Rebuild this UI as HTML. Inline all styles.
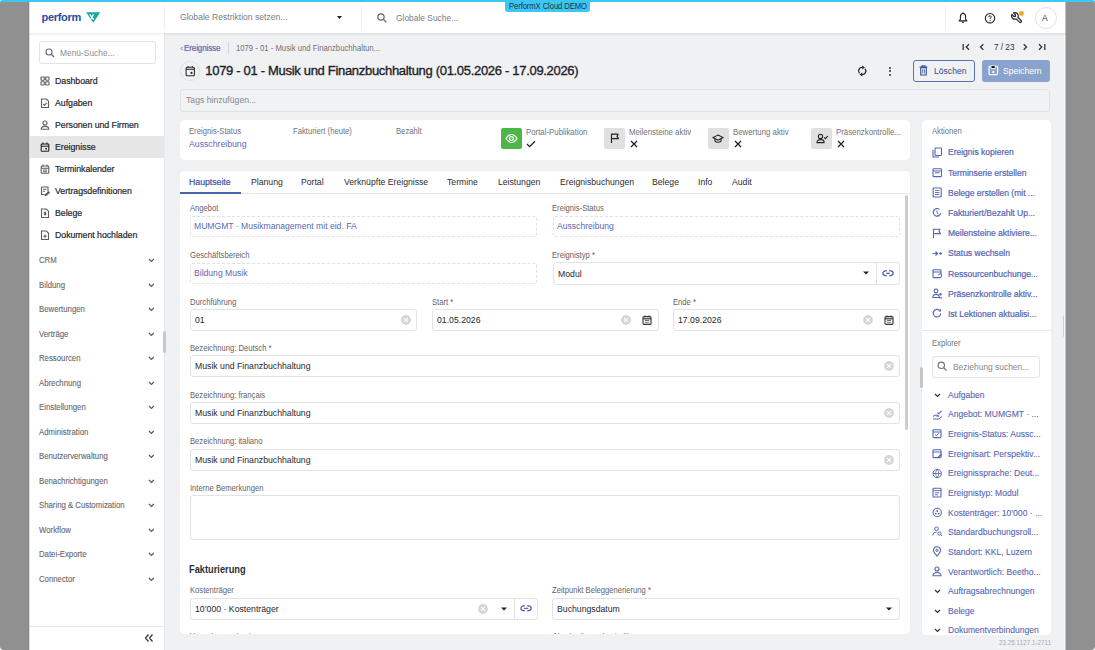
<!DOCTYPE html>
<html><head><meta charset="utf-8">
<style>
*{box-sizing:border-box;margin:0;padding:0}
html,body{width:1095px;height:650px;overflow:hidden}
body{background:#fff;font-family:"Liberation Sans",sans-serif;position:relative;color:#222}
.a{position:absolute}
.t{position:absolute;white-space:nowrap;line-height:1}
</style></head>
<body>

<div class="a" style="left:0px;top:0px;width:1095px;height:650px;background:#909090;border-radius:4px"></div>
<div class="a" style="left:29px;top:0px;width:1037px;height:650px;background:#fff"></div>
<div class="a" style="left:164px;top:33px;width:902px;height:617px;background:#f0f1f3"></div>
<div class="a" style="left:0px;top:0px;width:1095px;height:2px;background:#3ec6f2;z-index:5;border-radius:3px 3px 0 0"></div>
<div class="a" style="left:29px;top:2px;width:1037px;height:31px;background:#fff"></div>
<div class="t " style="left:41.50px;top:12.00px;font-size:11px;color:#1f4f9e;font-weight:700;letter-spacing:-0.3px;">perform</div>
<svg class="a" style="left:86px;top:12px;" width="15" height="12" viewBox="0 0 15 12"><path d="M.1 .2H14.2L7.4 10.8Z" fill="#16a9a0"/><path d="M3.8 2.4L7.7 7.7M7.5 2.4L4.9 7" stroke="#fff" stroke-width="1.25" fill="none"/></svg>
<div class="a" style="left:164px;top:6px;width:1px;height:23px;background:#eeeeee"></div>
<div class="t " style="left:180.00px;top:13.00px;font-size:9.299px;color:#7a7d82;transform:scaleX(0.9259);transform-origin:0 0;">Globale Restriktion setzen...</div>
<svg class="a" style="left:336.5px;top:15.5px;" width="5" height="3" viewBox="0 0 5 3"><path d="M0 0H5L2.5 3Z" fill="#222"/></svg>
<div class="a" style="left:360.5px;top:6px;width:1px;height:23px;background:#eeeeee"></div>
<svg class="a" style="left:377px;top:13px;" width="10" height="10" viewBox="0 0 10 10"><circle cx="4" cy="4" r="3.2" stroke="#666" stroke-width="1.2" fill="none"/><path d="M6.4 6.4L9.3 9.3" stroke="#666" stroke-width="1.3"/></svg>
<div class="t " style="left:396.30px;top:14.00px;font-size:9.081px;color:#7a7d82;transform:scaleX(0.9259);transform-origin:0 0;">Globale Suche...</div>
<div class="a" style="left:505px;top:0;width:85px;height:12px;background:#3ec6f2;border-radius:0 0 3px 3px;z-index:5"></div>
<div class="t " style="left:508.50px;top:2.00px;font-size:8.315px;color:#173848;letter-spacing:-0.10800000000000001px;z-index:6;transform:scaleX(0.9259);transform-origin:0 0;">PerformX Cloud DEMO</div>
<div class="a" style="left:944.5px;top:6px;width:1px;height:23px;background:#eeeeee"></div>
<svg class="a" style="left:958px;top:12px;" width="10" height="11" viewBox="0 0 10 11"><path d="M5 1.2C3.2 1.4 2.4 2.8 2.4 4.8V7.4L1.1 8.9H8.9L7.6 7.4V4.8C7.6 2.8 6.8 1.4 5 1.2Z" stroke="#222" stroke-width="1.1" fill="none" stroke-linejoin="round"/><path d="M4 10.1H6" stroke="#222" stroke-width="1.1"/><path d="M5 .4V1.3" stroke="#222" stroke-width="1"/></svg>
<svg class="a" style="left:984px;top:11.5px;" width="12" height="12" viewBox="0 0 12 12"><circle cx="6" cy="6.2" r="4.7" stroke="#222" stroke-width="1.1" fill="none"/><path d="M4.7 5C4.7 4.2 5.3 3.7 6 3.7S7.3 4.2 7.3 4.9C7.3 5.8 6 5.9 6 7" stroke="#222" stroke-width=".9" fill="none"/><circle cx="6" cy="8.4" r=".55" fill="#222"/></svg>
<svg class="a" style="left:1010.4px;top:11.4px;" width="13" height="13" viewBox="0 0 13 13"><g transform="scale(0.54)"><path d="M7 10h3v-3l-3.5 -3.5a6 6 0 0 1 8 8l6 6a2 2 0 0 1 -3 3l-6 -6a6 6 0 0 1 -8 -8l3.5 3.5" stroke="#2a2a2a" stroke-width="2.3" fill="none" stroke-linejoin="round" stroke-linecap="round"/></g></svg>
<div class="a" style="left:1019px;top:10.9px;width:4.8px;height:4.8px;border-radius:50%;background:#f4ab2a"></div>
<div class="a" style="left:1035px;top:6.5px;width:22px;height:22px;border:1px solid #e3e3e3;border-radius:50%"></div>
<div class="t " style="left:1042.30px;top:14.00px;font-size:9.299px;color:#333;transform:scaleX(0.9259);transform-origin:0 0;">A</div>
<div class="a" style="left:29px;top:33px;width:135px;height:617px;background:#fff"></div>
<div class="a" style="left:163.5px;top:33px;width:1px;height:617px;background:#e9e9e9"></div>
<div class="a" style="left:38.6px;top:41px;width:117px;height:23px;border:1px solid #e2e3e5;border-radius:3px"></div>
<svg class="a" style="left:44.5px;top:47.5px;" width="10" height="10" viewBox="0 0 10 10"><circle cx="4" cy="4" r="3" stroke="#6a6a6a" stroke-width="1.15" fill="none"/><path d="M6.3 6.3L9 9" stroke="#6a6a6a" stroke-width="1.3"/></svg>
<div class="t " style="left:59.90px;top:49.00px;font-size:9.081px;color:#8a8d91;transform:scaleX(0.9259);transform-origin:0 0;">Menü-Suche...</div>
<div class="a" style="left:29px;top:136px;width:134.5px;height:22px;background:#e6e6e6"></div>
<svg class="a" style="left:39.5px;top:75.5px;" width="10" height="11" viewBox="0 0 10 11"><g fill="none" stroke="#5a5e63" stroke-width="1.1"><rect x="1" y="1" width="3.3" height="3.3" rx=".6"/><rect x="5.7" y="1" width="3.3" height="3.3" rx=".6"/><rect x="1" y="5.7" width="3.3" height="3.3" rx=".6"/><rect x="5.7" y="5.7" width="3.3" height="3.3" rx=".6"/></g></svg>
<div class="t " style="left:54.50px;top:76.00px;font-size:9.518px;color:#25292e;-webkit-text-stroke:0.22px #25292e;letter-spacing:-0.054000000000000006px;transform:scaleX(0.9259);transform-origin:0 0;">Dashboard</div>
<svg class="a" style="left:39.5px;top:97.5px;" width="10" height="11" viewBox="0 0 10 11"><g fill="none" stroke="#5a5e63" stroke-width="1.1"><path d="M1.5 1H6.3L8.5 3.2V9.5H1.5Z"/><path d="M3.2 6L4.5 7.2L6.8 4.8"/></g></svg>
<div class="t " style="left:54.50px;top:98.00px;font-size:9.518px;color:#25292e;-webkit-text-stroke:0.22px #25292e;letter-spacing:-0.054000000000000006px;transform:scaleX(0.9259);transform-origin:0 0;">Aufgaben</div>
<svg class="a" style="left:39.5px;top:119.5px;" width="10" height="11" viewBox="0 0 10 11"><g fill="none" stroke="#5a5e63" stroke-width="1.1"><circle cx="5" cy="3" r="2"/><path d="M1.2 9.3C1.2 7 3 6.4 5 6.4S8.8 7 8.8 9.3Z"/></g></svg>
<div class="t " style="left:54.50px;top:120.00px;font-size:9.518px;color:#25292e;-webkit-text-stroke:0.22px #25292e;letter-spacing:-0.054000000000000006px;transform:scaleX(0.9259);transform-origin:0 0;">Personen und Firmen</div>
<svg class="a" style="left:39.5px;top:141.5px;" width="10" height="11" viewBox="0 0 10 11"><g fill="none" stroke="#222" stroke-width="1.1"><rect x="1.2" y="2" width="7.6" height="7.3" rx=".8"/><path d="M1.2 4.2H8.8M3 .6V2.4M7 .6V2.4"/><rect x="5.3" y="6" width="1.6" height="1.6" fill="#222" stroke="none"/></g></svg>
<div class="t " style="left:54.50px;top:142.00px;font-size:9.518px;color:#25292e;-webkit-text-stroke:0.22px #25292e;letter-spacing:-0.054000000000000006px;transform:scaleX(0.9259);transform-origin:0 0;">Ereignisse</div>
<svg class="a" style="left:39.5px;top:163.5px;" width="10" height="11" viewBox="0 0 10 11"><g fill="none" stroke="#5a5e63" stroke-width="1.1"><rect x="1.2" y="2" width="7.6" height="7.3" rx=".8"/><path d="M1.2 4.2H8.8M3 .6V2.4M7 .6V2.4M3 6H7M3 7.7H7"/></g></svg>
<div class="t " style="left:54.50px;top:164.00px;font-size:9.518px;color:#25292e;-webkit-text-stroke:0.22px #25292e;letter-spacing:-0.054000000000000006px;transform:scaleX(0.9259);transform-origin:0 0;">Terminkalender</div>
<svg class="a" style="left:39.5px;top:185.5px;" width="10" height="11" viewBox="0 0 10 11"><g fill="none" stroke="#5a5e63" stroke-width="1.1"><path d="M1.5 1H8V5.5M1.5 1V8.5H4.5M3 3.3H6.5M3 5.3H5"/><path d="M5.2 8.8L8.5 5.8L9.3 6.6L6 9.5H5.2Z"/></g></svg>
<div class="t " style="left:54.50px;top:186.00px;font-size:9.518px;color:#25292e;-webkit-text-stroke:0.22px #25292e;letter-spacing:-0.054000000000000006px;transform:scaleX(0.9259);transform-origin:0 0;">Vertragsdefinitionen</div>
<svg class="a" style="left:39.5px;top:207.5px;" width="10" height="11" viewBox="0 0 10 11"><g fill="none" stroke="#5a5e63" stroke-width="1.1"><path d="M1.5 1H6.3L8.5 3.2V9.5H1.5Z"/><path d="M6 4.2H4.3V5.3H5.7V6.6H4"/></g></svg>
<div class="t " style="left:54.50px;top:208.00px;font-size:9.518px;color:#25292e;-webkit-text-stroke:0.22px #25292e;letter-spacing:-0.054000000000000006px;transform:scaleX(0.9259);transform-origin:0 0;">Belege</div>
<svg class="a" style="left:39.5px;top:229.5px;" width="10" height="11" viewBox="0 0 10 11"><g fill="none" stroke="#5a5e63" stroke-width="1.1"><path d="M1.5 1H6.3L8.5 3.2V9.5H1.5Z"/><path d="M5 4.5V7.8M3.3 6.2H6.7"/></g></svg>
<div class="t " style="left:54.50px;top:230.00px;font-size:9.518px;color:#25292e;-webkit-text-stroke:0.22px #25292e;letter-spacing:-0.054000000000000006px;transform:scaleX(0.9259);transform-origin:0 0;">Dokument hochladen</div>
<div class="t " style="left:38.80px;top:256.00px;font-size:8.424px;color:#65686d;-webkit-text-stroke:0.1px #65686d;transform:scaleX(0.9259);transform-origin:0 0;">CRM</div>
<svg class="a" style="left:148px;top:258.0px;" width="7" height="5" viewBox="0 0 7 5"><path d="M1 1L3.4 3.4L5.8 1" stroke="#585858" stroke-width="1.15" fill="none"/></svg>
<div class="t " style="left:38.80px;top:281.00px;font-size:8.424px;color:#65686d;-webkit-text-stroke:0.1px #65686d;transform:scaleX(0.9259);transform-origin:0 0;">Bildung</div>
<svg class="a" style="left:148px;top:282.5px;" width="7" height="5" viewBox="0 0 7 5"><path d="M1 1L3.4 3.4L5.8 1" stroke="#585858" stroke-width="1.15" fill="none"/></svg>
<div class="t " style="left:38.80px;top:305.00px;font-size:8.424px;color:#65686d;-webkit-text-stroke:0.1px #65686d;transform:scaleX(0.9259);transform-origin:0 0;">Bewertungen</div>
<svg class="a" style="left:148px;top:307.0px;" width="7" height="5" viewBox="0 0 7 5"><path d="M1 1L3.4 3.4L5.8 1" stroke="#585858" stroke-width="1.15" fill="none"/></svg>
<div class="t " style="left:38.80px;top:330.00px;font-size:8.424px;color:#65686d;-webkit-text-stroke:0.1px #65686d;transform:scaleX(0.9259);transform-origin:0 0;">Verträge</div>
<svg class="a" style="left:148px;top:331.5px;" width="7" height="5" viewBox="0 0 7 5"><path d="M1 1L3.4 3.4L5.8 1" stroke="#585858" stroke-width="1.15" fill="none"/></svg>
<div class="t " style="left:38.80px;top:354.00px;font-size:8.424px;color:#65686d;-webkit-text-stroke:0.1px #65686d;transform:scaleX(0.9259);transform-origin:0 0;">Ressourcen</div>
<svg class="a" style="left:148px;top:356.0px;" width="7" height="5" viewBox="0 0 7 5"><path d="M1 1L3.4 3.4L5.8 1" stroke="#585858" stroke-width="1.15" fill="none"/></svg>
<div class="t " style="left:38.80px;top:379.00px;font-size:8.424px;color:#65686d;-webkit-text-stroke:0.1px #65686d;transform:scaleX(0.9259);transform-origin:0 0;">Abrechnung</div>
<svg class="a" style="left:148px;top:380.5px;" width="7" height="5" viewBox="0 0 7 5"><path d="M1 1L3.4 3.4L5.8 1" stroke="#585858" stroke-width="1.15" fill="none"/></svg>
<div class="t " style="left:38.80px;top:403.00px;font-size:8.424px;color:#65686d;-webkit-text-stroke:0.1px #65686d;transform:scaleX(0.9259);transform-origin:0 0;">Einstellungen</div>
<svg class="a" style="left:148px;top:405.0px;" width="7" height="5" viewBox="0 0 7 5"><path d="M1 1L3.4 3.4L5.8 1" stroke="#585858" stroke-width="1.15" fill="none"/></svg>
<div class="t " style="left:38.80px;top:428.00px;font-size:8.424px;color:#65686d;-webkit-text-stroke:0.1px #65686d;transform:scaleX(0.9259);transform-origin:0 0;">Administration</div>
<svg class="a" style="left:148px;top:429.5px;" width="7" height="5" viewBox="0 0 7 5"><path d="M1 1L3.4 3.4L5.8 1" stroke="#585858" stroke-width="1.15" fill="none"/></svg>
<div class="t " style="left:38.80px;top:452.00px;font-size:8.424px;color:#65686d;-webkit-text-stroke:0.1px #65686d;transform:scaleX(0.9259);transform-origin:0 0;">Benutzerverwaltung</div>
<svg class="a" style="left:148px;top:454.0px;" width="7" height="5" viewBox="0 0 7 5"><path d="M1 1L3.4 3.4L5.8 1" stroke="#585858" stroke-width="1.15" fill="none"/></svg>
<div class="t " style="left:38.80px;top:477.00px;font-size:8.424px;color:#65686d;-webkit-text-stroke:0.1px #65686d;transform:scaleX(0.9259);transform-origin:0 0;">Benachrichtigungen</div>
<svg class="a" style="left:148px;top:478.5px;" width="7" height="5" viewBox="0 0 7 5"><path d="M1 1L3.4 3.4L5.8 1" stroke="#585858" stroke-width="1.15" fill="none"/></svg>
<div class="t " style="left:38.80px;top:501.00px;font-size:8.424px;color:#65686d;-webkit-text-stroke:0.1px #65686d;transform:scaleX(0.9259);transform-origin:0 0;">Sharing &amp; Customization</div>
<svg class="a" style="left:148px;top:503.0px;" width="7" height="5" viewBox="0 0 7 5"><path d="M1 1L3.4 3.4L5.8 1" stroke="#585858" stroke-width="1.15" fill="none"/></svg>
<div class="t " style="left:38.80px;top:526.00px;font-size:8.424px;color:#65686d;-webkit-text-stroke:0.1px #65686d;transform:scaleX(0.9259);transform-origin:0 0;">Workflow</div>
<svg class="a" style="left:148px;top:527.5px;" width="7" height="5" viewBox="0 0 7 5"><path d="M1 1L3.4 3.4L5.8 1" stroke="#585858" stroke-width="1.15" fill="none"/></svg>
<div class="t " style="left:38.80px;top:550.00px;font-size:8.424px;color:#65686d;-webkit-text-stroke:0.1px #65686d;transform:scaleX(0.9259);transform-origin:0 0;">Datei-Exporte</div>
<svg class="a" style="left:148px;top:552.0px;" width="7" height="5" viewBox="0 0 7 5"><path d="M1 1L3.4 3.4L5.8 1" stroke="#585858" stroke-width="1.15" fill="none"/></svg>
<div class="t " style="left:38.80px;top:575.00px;font-size:8.424px;color:#65686d;-webkit-text-stroke:0.1px #65686d;transform:scaleX(0.9259);transform-origin:0 0;">Connector</div>
<svg class="a" style="left:148px;top:576.5px;" width="7" height="5" viewBox="0 0 7 5"><path d="M1 1L3.4 3.4L5.8 1" stroke="#585858" stroke-width="1.15" fill="none"/></svg>
<div class="a" style="left:29px;top:626px;width:134.5px;height:1px;background:#e8e8e8"></div>
<svg class="a" style="left:144px;top:633px;" width="10" height="10" viewBox="0 0 10 10"><path d="M4.5 1.5L1.5 5L4.5 8.5M8.5 1.5L5.5 5L8.5 8.5" stroke="#333" stroke-width="1.2" fill="none"/></svg>
<div class="a" style="left:163px;top:331px;width:3px;height:22px;background:#c9c9c9;border-radius:2px"></div>
<svg class="a" style="left:180px;top:45.5px;" width="4" height="5" viewBox="0 0 4 5"><path d="M2.6 .8L1 2.5L2.6 4.2" stroke="#5563b3" stroke-width=".9" fill="none"/></svg>
<div class="t " style="left:184.00px;top:44.00px;font-size:8.643px;color:#5a68b5;-webkit-text-stroke:0.22px #5a68b5;letter-spacing:-0.10800000000000001px;transform:scaleX(0.9259);transform-origin:0 0;">Ereignisse</div>
<div class="a" style="left:228px;top:42px;width:1px;height:12px;background:#d5d6d9"></div>
<div class="t " style="left:236.10px;top:44.00px;font-size:8.337px;color:#6f7276;transform:scaleX(0.9259);transform-origin:0 0;">1079 - 01 - Musik und Finanzbuchhaltun...</div>
<svg class="a" style="left:962px;top:43px;" width="9" height="8" viewBox="0 0 9 8"><path d="M1.2 1V7" stroke="#333" stroke-width="1.3"/><path d="M7 1.2L4.2 4L7 6.8" stroke="#333" stroke-width="1.3" fill="none"/></svg>
<svg class="a" style="left:979px;top:43px;" width="6" height="8" viewBox="0 0 6 8"><path d="M4.3 1.2L1.5 4L4.3 6.8" stroke="#333" stroke-width="1.3" fill="none"/></svg>
<div class="t " style="left:993.80px;top:43.00px;font-size:8.972px;color:#333;letter-spacing:-0.054000000000000006px;transform:scaleX(0.9259);transform-origin:0 0;">7 / 23</div>
<svg class="a" style="left:1022px;top:43px;" width="6" height="8" viewBox="0 0 6 8"><path d="M1.7 1.2L4.5 4L1.7 6.8" stroke="#333" stroke-width="1.3" fill="none"/></svg>
<svg class="a" style="left:1037px;top:43px;" width="9" height="8" viewBox="0 0 9 8"><path d="M7.8 1V7" stroke="#333" stroke-width="1.3"/><path d="M2 1.2L4.8 4L2 6.8" stroke="#333" stroke-width="1.3" fill="none"/></svg>
<div class="a" style="left:180.4px;top:61px;width:19.5px;height:19.5px;border:1px solid #e0e1e4;border-radius:50%"></div>
<svg class="a" style="left:185px;top:65px;" width="11" height="12" viewBox="0 0 11 12"><rect x="1.1" y="2.2" width="8.3" height="8.6" rx="1" stroke="#2a2a2a" stroke-width="1.1" fill="none"/><path d="M1.1 4.3H9.4" stroke="#2a2a2a" stroke-width="1.1"/><path d="M3.2 1V2.6M7.3 1V2.6" stroke="#2a2a2a" stroke-width="1"/><circle cx="6.5" cy="7.9" r="1.1" fill="#2a2a2a"/></svg>
<div class="t " style="left:205.30px;top:64.00px;font-size:13px;color:#1f2328;-webkit-text-stroke:0.35px #1f2328;letter-spacing:-0.31px;">1079 - 01 - Musik und Finanzbuchhaltung (01.05.2026 - 17.09.2026)</div>
<svg class="a" style="left:856px;top:64px;" width="13" height="14" viewBox="0 0 13 14"><g stroke="#2a2a2a" stroke-width="1.3" fill="none"><path d="M6.83 3.45A3.6 3.6 0 0 0 3.44 9.31"/><path d="M5.57 10.55A3.6 3.6 0 0 0 8.96 4.69"/></g><path d="M6.2 1.5L8.9 3.45L6.2 5.4Z" fill="#2a2a2a"/><path d="M6.2 8.6L3.5 10.55L6.2 12.5Z" fill="#2a2a2a"/></svg>
<div class="a" style="left:888.5px;top:66.5px;width:2px;height:2px;border-radius:1px;background:#333"></div>
<div class="a" style="left:888.5px;top:70px;width:2px;height:2px;border-radius:1px;background:#333"></div>
<div class="a" style="left:888.5px;top:73.5px;width:2px;height:2px;border-radius:1px;background:#333"></div>
<div class="a" style="left:912.5px;top:60px;width:62.5px;height:22px;border:1px solid #5a73b0;border-radius:3px"></div>
<svg class="a" style="left:919px;top:65px;" width="9" height="11" viewBox="0 0 9 11"><path d="M.5 2H8.5M3 2V.7H6V2" stroke="#3c5496" stroke-width="1.1" fill="none"/><path d="M1.7 2.6H7.3V10H1.7Z" stroke="#3c5496" stroke-width="1.1" fill="none"/><path d="M3.6 4.2V8.4M5.4 4.2V8.4" stroke="#3c5496" stroke-width=".8"/></svg>
<div class="t " style="left:933.80px;top:67.00px;font-size:9.299px;color:#36498a;transform:scaleX(0.9259);transform-origin:0 0;">Löschen</div>
<div class="a" style="left:982px;top:60px;width:67.5px;height:22px;background:#8aa3cc;border-radius:3px"></div>
<svg class="a" style="left:988px;top:65px;" width="11" height="11" viewBox="0 0 11 11"><rect x="1" y="1" width="8.6" height="8.6" rx="1.3" stroke="#fff" stroke-width="1.2" fill="none"/><path d="M3 1.2V3.6H7.2V1.2" stroke="#fff" stroke-width="1"/><rect x="4.3" y="5.9" width="2" height="2" fill="#fff"/></svg>
<div class="t " style="left:1003.10px;top:67.00px;font-size:9.245px;color:#fff;transform:scaleX(0.9259);transform-origin:0 0;">Speichern</div>
<div class="a" style="left:180px;top:89px;width:870px;height:22.5px;border:1px solid #e1e2e5;border-radius:3px;background:#f1f2f4"></div>
<div class="t " style="left:185.50px;top:96.00px;font-size:9.354px;color:#85888c;transform:scaleX(0.9259);transform-origin:0 0;">Tags hinzufügen...</div>
<div class="a" style="left:180px;top:120px;width:730px;height:40px;background:#fff;border-radius:4px;box-shadow:0 0 1.5px rgba(0,0,0,.06)"></div>
<div class="t " style="left:189.20px;top:127.00px;font-size:8.315px;color:#707378;transform:scaleX(0.9259);transform-origin:0 0;">Ereignis-Status</div>
<div class="t " style="left:189.20px;top:139.00px;font-size:9.409px;color:#5a68b5;transform:scaleX(0.9259);transform-origin:0 0;">Ausschreibung</div>
<div class="t " style="left:292.50px;top:127.00px;font-size:8.315px;color:#707378;transform:scaleX(0.9259);transform-origin:0 0;">Fakturiert (heute)</div>
<div class="t " style="left:396.10px;top:127.00px;font-size:8.315px;color:#707378;transform:scaleX(0.9259);transform-origin:0 0;">Bezahlt</div>
<div class="a" style="left:500.5px;top:128px;width:21px;height:21px;background:#4cb648;border-radius:2px"></div>
<div class="t " style="left:525.60px;top:128.00px;font-size:8.468px;color:#707378;transform:scaleX(0.9259);transform-origin:0 0;">Portal-Publikation</div>
<svg class="a" style="left:526.0px;top:140px;" width="10" height="8" viewBox="0 0 10 8"><path d="M1 4L3.6 6.6L9 1.2" stroke="#222" stroke-width="1.3" fill="none"/></svg>
<div class="a" style="left:604.0px;top:128px;width:21px;height:21px;background:#e0e0e0;border-radius:2px"></div>
<div class="t " style="left:629.10px;top:128.00px;font-size:8.468px;color:#707378;transform:scaleX(0.9259);transform-origin:0 0;">Meilensteine aktiv</div>
<svg class="a" style="left:630.0px;top:140px;" width="8" height="8" viewBox="0 0 8 8"><path d="M1 1L7 7M7 1L1 7" stroke="#222" stroke-width="1.3"/></svg>
<div class="a" style="left:707.5px;top:128px;width:21px;height:21px;background:#e0e0e0;border-radius:2px"></div>
<div class="t " style="left:732.60px;top:128.00px;font-size:8.468px;color:#707378;transform:scaleX(0.9259);transform-origin:0 0;">Bewertung aktiv</div>
<svg class="a" style="left:733.5px;top:140px;" width="8" height="8" viewBox="0 0 8 8"><path d="M1 1L7 7M7 1L1 7" stroke="#222" stroke-width="1.3"/></svg>
<div class="a" style="left:811.0px;top:128px;width:21px;height:21px;background:#e0e0e0;border-radius:2px"></div>
<div class="t " style="left:836.10px;top:128.00px;font-size:8.468px;color:#707378;transform:scaleX(0.9259);transform-origin:0 0;">Präsenzkontrolle...</div>
<svg class="a" style="left:837.0px;top:140px;" width="8" height="8" viewBox="0 0 8 8"><path d="M1 1L7 7M7 1L1 7" stroke="#222" stroke-width="1.3"/></svg>
<svg class="a" style="left:504.5px;top:133px;" width="13" height="11" viewBox="0 0 13 11"><path d="M1 5.5C2.8 2.5 4.5 1.5 6.5 1.5S10.2 2.5 12 5.5C10.2 8.5 8.5 9.5 6.5 9.5S2.8 8.5 1 5.5Z" stroke="#fff" stroke-width="1.2" fill="none"/><circle cx="6.5" cy="5.5" r="1.9" stroke="#fff" stroke-width="1.2" fill="none"/></svg>
<svg class="a" style="left:610px;top:133px;" width="10" height="11" viewBox="0 0 10 11"><path d="M1.5 10V1.2H8L7 3.4L8.5 5.6H2.2" stroke="#222" stroke-width="1.2" fill="none" stroke-linejoin="round"/></svg>
<svg class="a" style="left:712.0px;top:134px;" width="12" height="10" viewBox="0 0 12 10"><path d="M6 1L11 3.6L6 6.2L1 3.6Z" stroke="#222" stroke-width="1.1" fill="none"/><path d="M3 4.8V7.2C4.3 8.6 7.7 8.6 9 7.2V4.8" stroke="#222" stroke-width="1.1" fill="none"/></svg>
<svg class="a" style="left:815.5px;top:133px;" width="13" height="11" viewBox="0 0 13 11"><circle cx="4.5" cy="3.4" r="2.1" stroke="#222" stroke-width="1.1" fill="none"/><path d="M1 9.6C1 7.3 2.8 6.6 4.5 6.6S7.8 7 8 8.2V9.6Z" stroke="#222" stroke-width="1.1" fill="none"/><path d="M8.2 4.5L9.4 5.7L11.8 3.2" stroke="#222" stroke-width="1.1" fill="none"/></svg>
<div class="a" style="left:180px;top:171px;width:730px;height:463px;background:#fff;border-radius:4px;box-shadow:0 0 1.5px rgba(0,0,0,.06);overflow:hidden" id="tc"></div>
<div class="a" style="left:180px;top:193px;width:730px;height:1px;background:#e6e7ea"></div>
<div class="t " style="left:189.00px;top:177.00px;font-size:9.518px;color:#3f56a6;-webkit-text-stroke:0.22px #3f56a6;letter-spacing:-0.054000000000000006px;transform:scaleX(0.9259);transform-origin:0 0;">Hauptseite</div>
<div class="t " style="left:250.50px;top:178.00px;font-size:9.354px;color:#2a2e33;transform:scaleX(0.9259);transform-origin:0 0;">Planung</div>
<div class="t " style="left:301.20px;top:178.00px;font-size:9.354px;color:#2a2e33;transform:scaleX(0.9259);transform-origin:0 0;">Portal</div>
<div class="t " style="left:344.10px;top:178.00px;font-size:9.354px;color:#2a2e33;transform:scaleX(0.9259);transform-origin:0 0;">Verknüpfte Ereignisse</div>
<div class="t " style="left:447.10px;top:178.00px;font-size:9.354px;color:#2a2e33;transform:scaleX(0.9259);transform-origin:0 0;">Termine</div>
<div class="t " style="left:497.50px;top:178.00px;font-size:9.354px;color:#2a2e33;transform:scaleX(0.9259);transform-origin:0 0;">Leistungen</div>
<div class="t " style="left:559.50px;top:178.00px;font-size:9.354px;color:#2a2e33;transform:scaleX(0.9259);transform-origin:0 0;">Ereignisbuchungen</div>
<div class="t " style="left:651.50px;top:178.00px;font-size:9.354px;color:#2a2e33;transform:scaleX(0.9259);transform-origin:0 0;">Belege</div>
<div class="t " style="left:697.50px;top:178.00px;font-size:9.354px;color:#2a2e33;transform:scaleX(0.9259);transform-origin:0 0;">Info</div>
<div class="t " style="left:732.10px;top:178.00px;font-size:9.354px;color:#2a2e33;transform:scaleX(0.9259);transform-origin:0 0;">Audit</div>
<div class="a" style="left:180px;top:192px;width:61px;height:2px;background:#4763ad"></div>
<div class="a" style="left:905px;top:195px;width:3px;height:235px;background:#cdcdcd;border-radius:2px"></div>
<div class="t " style="left:189.50px;top:205.00px;font-size:8.26px;color:#5f6368;transform:scaleX(0.9259);transform-origin:0 0;">Angebot</div>
<div class="a" style="left:190px;top:216px;width:347px;height:21px;border:1px dashed #e0e1e4;border-radius:2px"></div>
<div class="t " style="left:194.30px;top:222.00px;font-size:9.299px;color:#5a68b5;transform:scaleX(0.9259);transform-origin:0 0;">MUMGMT · Musikmanagement mit eid. FA</div>
<div class="t " style="left:552.20px;top:205.00px;font-size:8.26px;color:#5f6368;transform:scaleX(0.9259);transform-origin:0 0;">Ereignis-Status</div>
<div class="a" style="left:553px;top:216px;width:347px;height:21px;border:1px dashed #e0e1e4;border-radius:2px"></div>
<div class="t " style="left:557.30px;top:222.00px;font-size:9.299px;color:#5a68b5;transform:scaleX(0.9259);transform-origin:0 0;">Ausschreibung</div>
<div class="t " style="left:189.50px;top:252.00px;font-size:8.26px;color:#5f6368;transform:scaleX(0.9259);transform-origin:0 0;">Geschäftsbereich</div>
<div class="a" style="left:190px;top:263px;width:347px;height:21px;border:1px dashed #e0e1e4;border-radius:2px"></div>
<div class="t " style="left:194.30px;top:269.00px;font-size:9.299px;color:#5a68b5;transform:scaleX(0.9259);transform-origin:0 0;">Bildung Musik</div>
<div class="t " style="left:552.20px;top:252.00px;font-size:8.26px;color:#5f6368;transform:scaleX(0.9259);transform-origin:0 0;">Ereignistyp *</div>
<div class="a" style="left:553px;top:262px;width:347px;height:23px;border:1px solid #e2e3e6;border-radius:3px;background:#fff"></div>
<div class="t " style="left:558.00px;top:269.00px;font-size:9.409px;color:#25292e;transform:scaleX(0.9259);transform-origin:0 0;">Modul</div>
<svg class="a" style="left:863.2px;top:271.3px;" width="6" height="4" viewBox="0 0 6 4"><path d="M0 .5H6L3 3.5Z" fill="#222"/></svg>
<div class="a" style="left:876px;top:262px;width:1px;height:23px;background:#e2e3e6"></div>
<svg class="a" style="left:882.3px;top:269.8px;" width="12" height="7" viewBox="0 0 12 7"><path d="M4.8 .9H3.4C2 .9 .9 2 .9 3.3S2 5.7 3.4 5.7H4.8M7.2 .9H8.6C10 .9 11.1 2 11.1 3.3S10 5.7 8.6 5.7H7.2M4.2 3.3H7.8" stroke="#4b5aab" stroke-width="1.2" fill="none"/></svg>
<div class="t " style="left:189.50px;top:299.00px;font-size:8.26px;color:#5f6368;transform:scaleX(0.9259);transform-origin:0 0;">Durchführung</div>
<div class="a" style="left:190px;top:309px;width:227px;height:22px;border:1px solid #e2e3e6;border-radius:3px;background:#fff"></div>
<div class="t " style="left:195.00px;top:315.00px;font-size:9.409px;color:#25292e;transform:scaleX(0.9259);transform-origin:0 0;">01</div>
<svg class="a" style="left:400.7px;top:315px;" width="10" height="10" viewBox="0 0 10 10"><circle cx="5" cy="5" r="4.9" fill="#d5d6d8"/><path d="M3.1 3.1L6.9 6.9M6.9 3.1L3.1 6.9" stroke="#fff" stroke-width="1.1"/></svg>
<div class="t " style="left:431.80px;top:299.00px;font-size:8.26px;color:#5f6368;transform:scaleX(0.9259);transform-origin:0 0;">Start *</div>
<div class="a" style="left:432px;top:309px;width:227px;height:22px;border:1px solid #e2e3e6;border-radius:3px;background:#fff"></div>
<div class="t " style="left:437.00px;top:315.00px;font-size:9.409px;color:#25292e;transform:scaleX(0.9259);transform-origin:0 0;">01.05.2026</div>
<svg class="a" style="left:621px;top:315px;" width="10" height="10" viewBox="0 0 10 10"><circle cx="5" cy="5" r="4.9" fill="#d5d6d8"/><path d="M3.1 3.1L6.9 6.9M6.9 3.1L3.1 6.9" stroke="#fff" stroke-width="1.1"/></svg>
<svg class="a" style="left:641.8px;top:315px;" width="10" height="10" viewBox="0 0 10 10"><rect x="1" y="1.6" width="8" height="7.8" rx="1" stroke="#333" stroke-width="1.1" fill="none"/><path d="M1 3.8H9" stroke="#333" stroke-width="1.2"/><path d="M2.8 5.5H7.2M2.8 7.3H7.2" stroke="#333" stroke-width=".7"/><path d="M3 .4V2M7 .4V2" stroke="#333" stroke-width="1"/></svg>
<div class="t " style="left:673.00px;top:299.00px;font-size:8.26px;color:#5f6368;transform:scaleX(0.9259);transform-origin:0 0;">Ende *</div>
<div class="a" style="left:673px;top:309px;width:227px;height:22px;border:1px solid #e2e3e6;border-radius:3px;background:#fff"></div>
<div class="t " style="left:678.00px;top:315.00px;font-size:9.409px;color:#25292e;transform:scaleX(0.9259);transform-origin:0 0;">17.09.2026</div>
<svg class="a" style="left:863px;top:315px;" width="10" height="10" viewBox="0 0 10 10"><circle cx="5" cy="5" r="4.9" fill="#d5d6d8"/><path d="M3.1 3.1L6.9 6.9M6.9 3.1L3.1 6.9" stroke="#fff" stroke-width="1.1"/></svg>
<svg class="a" style="left:883.5px;top:315px;" width="10" height="10" viewBox="0 0 10 10"><rect x="1" y="1.6" width="8" height="7.8" rx="1" stroke="#333" stroke-width="1.1" fill="none"/><path d="M1 3.8H9" stroke="#333" stroke-width="1.2"/><path d="M2.8 5.5H7.2M2.8 7.3H7.2" stroke="#333" stroke-width=".7"/><path d="M3 .4V2M7 .4V2" stroke="#333" stroke-width="1"/></svg>
<div class="t " style="left:189.50px;top:345.00px;font-size:8.26px;color:#5f6368;transform:scaleX(0.9259);transform-origin:0 0;">Bezeichnung: Deutsch *</div>
<div class="a" style="left:190px;top:355px;width:710px;height:22px;border:1px solid #e2e3e6;border-radius:3px;background:#fff"></div>
<div class="t " style="left:195.00px;top:361.00px;font-size:9.409px;color:#25292e;transform:scaleX(0.9259);transform-origin:0 0;">Musik und Finanzbuchhaltung</div>
<svg class="a" style="left:883.9px;top:361px;" width="10" height="10" viewBox="0 0 10 10"><circle cx="5" cy="5" r="4.9" fill="#d5d6d8"/><path d="M3.1 3.1L6.9 6.9M6.9 3.1L3.1 6.9" stroke="#fff" stroke-width="1.1"/></svg>
<div class="t " style="left:189.50px;top:392.00px;font-size:8.26px;color:#5f6368;transform:scaleX(0.9259);transform-origin:0 0;">Bezeichnung: français</div>
<div class="a" style="left:190px;top:402px;width:710px;height:22px;border:1px solid #e2e3e6;border-radius:3px;background:#fff"></div>
<div class="t " style="left:195.00px;top:408.00px;font-size:9.409px;color:#25292e;transform:scaleX(0.9259);transform-origin:0 0;">Musik und Finanzbuchhaltung</div>
<svg class="a" style="left:883.9px;top:408px;" width="10" height="10" viewBox="0 0 10 10"><circle cx="5" cy="5" r="4.9" fill="#d5d6d8"/><path d="M3.1 3.1L6.9 6.9M6.9 3.1L3.1 6.9" stroke="#fff" stroke-width="1.1"/></svg>
<div class="t " style="left:189.50px;top:438.00px;font-size:8.26px;color:#5f6368;transform:scaleX(0.9259);transform-origin:0 0;">Bezeichnung: italiano</div>
<div class="a" style="left:190px;top:449px;width:710px;height:22px;border:1px solid #e2e3e6;border-radius:3px;background:#fff"></div>
<div class="t " style="left:195.00px;top:455.00px;font-size:9.409px;color:#25292e;transform:scaleX(0.9259);transform-origin:0 0;">Musik und Finanzbuchhaltung</div>
<svg class="a" style="left:883.9px;top:455px;" width="10" height="10" viewBox="0 0 10 10"><circle cx="5" cy="5" r="4.9" fill="#d5d6d8"/><path d="M3.1 3.1L6.9 6.9M6.9 3.1L3.1 6.9" stroke="#fff" stroke-width="1.1"/></svg>
<div class="t " style="left:189.50px;top:485.00px;font-size:8.26px;color:#5f6368;transform:scaleX(0.9259);transform-origin:0 0;">Interne Bemerkungen</div>
<div class="a" style="left:190px;top:495px;width:710px;height:45px;border:1px solid #e2e3e6;border-radius:3px;background:#fff"></div>
<div class="t " style="left:189.20px;top:565.00px;font-size:10.381px;color:#2b2f34;font-weight:700;transform:scaleX(0.8929);transform-origin:0 0;">Fakturierung</div>
<div class="t " style="left:189.50px;top:587.00px;font-size:8.26px;color:#5f6368;transform:scaleX(0.9259);transform-origin:0 0;">Kostenträger</div>
<div class="a" style="left:190px;top:598px;width:348px;height:22px;border:1px solid #e2e3e6;border-radius:3px;background:#fff"></div>
<div class="t " style="left:195.00px;top:604.00px;font-size:9.409px;color:#25292e;transform:scaleX(0.9259);transform-origin:0 0;">10’000 · Kostenträger</div>
<svg class="a" style="left:477.8px;top:603.8px;" width="10" height="10" viewBox="0 0 10 10"><circle cx="5" cy="5" r="4.9" fill="#d5d6d8"/><path d="M3.1 3.1L6.9 6.9M6.9 3.1L3.1 6.9" stroke="#fff" stroke-width="1.1"/></svg>
<svg class="a" style="left:500.6px;top:606.8px;" width="6" height="4" viewBox="0 0 6 4"><path d="M0 .5H6L3 3.5Z" fill="#222"/></svg>
<div class="a" style="left:514px;top:598px;width:1px;height:22px;background:#e2e3e6"></div>
<svg class="a" style="left:520.3px;top:605.3px;" width="12" height="7" viewBox="0 0 12 7"><path d="M4.8 .9H3.4C2 .9 .9 2 .9 3.3S2 5.7 3.4 5.7H4.8M7.2 .9H8.6C10 .9 11.1 2 11.1 3.3S10 5.7 8.6 5.7H7.2M4.2 3.3H7.8" stroke="#4b5aab" stroke-width="1.2" fill="none"/></svg>
<div class="t " style="left:552.20px;top:587.00px;font-size:8.26px;color:#5f6368;transform:scaleX(0.9259);transform-origin:0 0;">Zeitpunkt Beleggenerierung *</div>
<div class="a" style="left:552px;top:598px;width:348px;height:22px;border:1px solid #e2e3e6;border-radius:3px;background:#fff"></div>
<div class="t " style="left:557.00px;top:604.00px;font-size:9.409px;color:#25292e;transform:scaleX(0.9259);transform-origin:0 0;">Buchungsdatum</div>
<svg class="a" style="left:886px;top:606.8px;" width="6" height="4" viewBox="0 0 6 4"><path d="M0 .5H6L3 3.5Z" fill="#222"/></svg>
<div class="a" style="left:180px;top:630px;width:730px;height:4px;overflow:hidden"><div class="t" style="left:10px;top:2px;font-size:7.55px;color:#6a6e73">Verrechnungskonto</div><div class="t" style="left:372.7px;top:2px;font-size:7.55px;color:#6a6e73">Abschreibungskonto für</div></div>
<div class="a" style="left:922px;top:120px;width:128.5px;height:514.5px;background:#fff;border-radius:4px;box-shadow:0 0 1.5px rgba(0,0,0,.06);overflow:hidden"></div>
<div class="t " style="left:931.50px;top:127.00px;font-size:8.315px;color:#707378;transform:scaleX(0.9259);transform-origin:0 0;">Aktionen</div>
<svg class="a" style="left:931.5px;top:146.7px;" width="11" height="11" viewBox="0 0 11 11"><rect x="3" y="1" width="6.5" height="7.5" rx=".8" stroke="#5666b3" stroke-width="1.1" fill="none"/><path d="M1 3V10H7" stroke="#5666b3" stroke-width="1.1" fill="none"/></svg>
<div class="t " style="left:947.50px;top:148.00px;font-size:9.299px;color:#5666b3;-webkit-text-stroke:0.22px #5666b3;letter-spacing:-0.0432px;transform:scaleX(0.9259);transform-origin:0 0;">Ereignis kopieren</div>
<svg class="a" style="left:931.5px;top:166.92px;" width="11" height="11" viewBox="0 0 11 11"><rect x="1" y="1.8" width="8.5" height="7.8" rx=".8" stroke="#5666b3" stroke-width="1.1" fill="none"/><path d="M1 4H9.5M3 5.8H7.5" stroke="#5666b3" stroke-width="1"/></svg>
<div class="t " style="left:947.50px;top:169.00px;font-size:9.299px;color:#5666b3;-webkit-text-stroke:0.22px #5666b3;letter-spacing:-0.0432px;transform:scaleX(0.9259);transform-origin:0 0;">Terminserie erstellen</div>
<svg class="a" style="left:931.5px;top:187.14px;" width="11" height="11" viewBox="0 0 11 11"><rect x="1.2" y="1" width="8" height="9" rx=".6" stroke="#5666b3" stroke-width="1.1" fill="none"/><path d="M3 3.5H7.4M3 5.5H7.4M3 7.5H7.4" stroke="#5666b3" stroke-width=".9"/></svg>
<div class="t " style="left:947.50px;top:189.00px;font-size:9.299px;color:#5666b3;-webkit-text-stroke:0.22px #5666b3;letter-spacing:-0.0432px;transform:scaleX(0.9259);transform-origin:0 0;">Belege erstellen (mit ...</div>
<svg class="a" style="left:931.5px;top:207.35999999999999px;" width="11" height="11" viewBox="0 0 11 11"><path d="M8.8 6A3.8 3.8 0 1 1 7.5 2.4" stroke="#5666b3" stroke-width="1.2" fill="none"/><path d="M5 3.5V5.8L6.5 6.8" stroke="#5666b3" stroke-width="1" fill="none"/></svg>
<div class="t " style="left:947.50px;top:209.00px;font-size:9.299px;color:#5666b3;-webkit-text-stroke:0.22px #5666b3;letter-spacing:-0.0432px;transform:scaleX(0.9259);transform-origin:0 0;">Fakturiert/Bezahlt Up...</div>
<svg class="a" style="left:931.5px;top:227.57999999999998px;" width="11" height="11" viewBox="0 0 11 11"><path d="M1.5 10V1.2H8L7 3.4L8.5 5.6H2.2" stroke="#5666b3" stroke-width="1.1" fill="none" stroke-linejoin="round"/></svg>
<div class="t " style="left:947.50px;top:229.00px;font-size:9.299px;color:#5666b3;-webkit-text-stroke:0.22px #5666b3;letter-spacing:-0.0432px;transform:scaleX(0.9259);transform-origin:0 0;">Meilensteine aktiviere...</div>
<svg class="a" style="left:931.5px;top:247.79999999999998px;" width="11" height="11" viewBox="0 0 11 11"><path d="M.5 5.5H5.5M3.5 3.5L5.5 5.5L3.5 7.5" stroke="#5666b3" stroke-width="1.1" fill="none"/><circle cx="8.5" cy="5.5" r="1.3" fill="#5666b3"/></svg>
<div class="t " style="left:947.50px;top:249.00px;font-size:9.299px;color:#5666b3;-webkit-text-stroke:0.22px #5666b3;letter-spacing:-0.0432px;transform:scaleX(0.9259);transform-origin:0 0;">Status wechseln</div>
<svg class="a" style="left:931.5px;top:268.02px;" width="11" height="11" viewBox="0 0 11 11"><rect x="1" y="1.8" width="8" height="7.8" rx=".8" stroke="#5666b3" stroke-width="1.1" fill="none"/><path d="M1 4H9" stroke="#5666b3" stroke-width="1"/><path d="M6.5 7.5A1.6 1.6 0 1 1 8.5 9" stroke="#5666b3" stroke-width="1" fill="#fff"/></svg>
<div class="t " style="left:947.50px;top:270.00px;font-size:9.299px;color:#5666b3;-webkit-text-stroke:0.22px #5666b3;letter-spacing:-0.0432px;transform:scaleX(0.9259);transform-origin:0 0;">Ressourcenbuchunge...</div>
<svg class="a" style="left:931.5px;top:288.24px;" width="11" height="11" viewBox="0 0 11 11"><circle cx="4" cy="3" r="1.9" stroke="#5666b3" stroke-width="1.1" fill="none"/><path d="M.8 9.5C.8 7.3 2.3 6.4 4 6.4S7 7 7.2 8.5V9.5Z" stroke="#5666b3" stroke-width="1.1" fill="none"/><circle cx="8.5" cy="6.3" r="1.2" fill="#5666b3"/><path d="M7 9.8H10" stroke="#5666b3" stroke-width="1.2"/></svg>
<div class="t " style="left:947.50px;top:290.00px;font-size:9.299px;color:#5666b3;-webkit-text-stroke:0.22px #5666b3;letter-spacing:-0.0432px;transform:scaleX(0.9259);transform-origin:0 0;">Präsenzkontrolle aktiv...</div>
<svg class="a" style="left:931.5px;top:308.46px;" width="11" height="11" viewBox="0 0 11 11"><path d="M8.8 5.5A3.8 3.8 0 1 1 7.5 2.3" stroke="#5666b3" stroke-width="1.2" fill="none"/><path d="M9 .8V3.5H6.3Z" fill="#5666b3"/></svg>
<div class="t " style="left:947.50px;top:310.00px;font-size:9.299px;color:#5666b3;-webkit-text-stroke:0.22px #5666b3;letter-spacing:-0.0432px;transform:scaleX(0.9259);transform-origin:0 0;">Ist Lektionen aktualisi...</div>
<div class="a" style="left:922px;top:330px;width:128.5px;height:1px;background:#e9eaec"></div>
<div class="t " style="left:931.50px;top:339.00px;font-size:8.315px;color:#707378;transform:scaleX(0.9259);transform-origin:0 0;">Explorer</div>
<div class="a" style="left:932px;top:355.5px;width:108px;height:22px;border:1px solid #e2e3e5;border-radius:3px"></div>
<svg class="a" style="left:937px;top:361px;" width="11" height="11" viewBox="0 0 11 11"><circle cx="4.3" cy="4.3" r="3.2" stroke="#777" stroke-width="1.2" fill="none"/><path d="M6.7 6.7L9.6 9.6" stroke="#777" stroke-width="1.3"/></svg>
<div class="t " style="left:953.30px;top:363.00px;font-size:9.081px;color:#85888c;transform:scaleX(0.9259);transform-origin:0 0;">Beziehung suchen...</div>
<svg class="a" style="left:934px;top:392.5px;" width="7" height="5" viewBox="0 0 7 5"><path d="M1 1L3.5 3.5L6 1" stroke="#333" stroke-width="1.2" fill="none"/></svg>
<div class="t " style="left:947.50px;top:391.00px;font-size:9.245px;color:#5666b3;-webkit-text-stroke:0.1px #5666b3;transform:scaleX(0.9259);transform-origin:0 0;">Aufgaben</div>
<svg class="a" style="left:931.5px;top:408.64px;" width="11" height="11" viewBox="0 0 11 11"><path d="M1 7.5L3 6.2H6L7 7.2H4.5M1 10H7L10 7.5" stroke="#5666b3" stroke-width="1" fill="none"/><path d="M5.5 3.5L6.8 4.8L9.5 1.8" stroke="#5666b3" stroke-width="1.1" fill="none"/></svg>
<div class="t " style="left:947.50px;top:410.00px;font-size:9.245px;color:#5666b3;-webkit-text-stroke:0.1px #5666b3;transform:scaleX(0.9259);transform-origin:0 0;">Angebot: MUMGMT · ...</div>
<svg class="a" style="left:931.5px;top:428.28px;" width="11" height="11" viewBox="0 0 11 11"><rect x="1" y="1.8" width="8" height="7.8" rx=".8" stroke="#5666b3" stroke-width="1.1" fill="none"/><path d="M1 4H9" stroke="#5666b3" stroke-width="1"/><path d="M3.2 6.5L4.5 7.6L6.8 5.3" stroke="#5666b3" stroke-width="1" fill="none"/></svg>
<div class="t " style="left:947.50px;top:430.00px;font-size:9.245px;color:#5666b3;-webkit-text-stroke:0.1px #5666b3;transform:scaleX(0.9259);transform-origin:0 0;">Ereignis-Status: Aussc...</div>
<svg class="a" style="left:931.5px;top:447.92px;" width="11" height="11" viewBox="0 0 11 11"><rect x="1" y="1.8" width="8" height="7.8" rx=".8" stroke="#5666b3" stroke-width="1.1" fill="none"/><path d="M1 4H9" stroke="#5666b3" stroke-width="1"/><path d="M6 9.5L9.6 6" stroke="#5666b3" stroke-width="1.4"/></svg>
<div class="t " style="left:947.50px;top:450.00px;font-size:9.245px;color:#5666b3;-webkit-text-stroke:0.1px #5666b3;transform:scaleX(0.9259);transform-origin:0 0;">Ereignisart: Perspektiv...</div>
<svg class="a" style="left:931.5px;top:467.56px;" width="11" height="11" viewBox="0 0 11 11"><circle cx="5.2" cy="5.5" r="4.2" stroke="#5666b3" stroke-width="1" fill="none"/><path d="M1 5.5H9.4M5.2 1.3C3.2 3.5 3.2 7.5 5.2 9.7M5.2 1.3C7.2 3.5 7.2 7.5 5.2 9.7" stroke="#5666b3" stroke-width=".8" fill="none"/></svg>
<div class="t " style="left:947.50px;top:469.00px;font-size:9.245px;color:#5666b3;-webkit-text-stroke:0.1px #5666b3;transform:scaleX(0.9259);transform-origin:0 0;">Ereignissprache: Deut...</div>
<svg class="a" style="left:931.5px;top:487.2px;" width="11" height="11" viewBox="0 0 11 11"><rect x="1" y="1.2" width="8" height="8.8" rx=".8" stroke="#5666b3" stroke-width="1.1" fill="none"/><path d="M1 3.6H9M2.8 5.8H7.2M2.8 7.8H6" stroke="#5666b3" stroke-width=".9"/></svg>
<div class="t " style="left:947.50px;top:489.00px;font-size:9.245px;color:#5666b3;-webkit-text-stroke:0.1px #5666b3;transform:scaleX(0.9259);transform-origin:0 0;">Ereignistyp: Modul</div>
<svg class="a" style="left:931.5px;top:506.84000000000003px;" width="11" height="11" viewBox="0 0 11 11"><circle cx="5.2" cy="5.5" r="4.2" stroke="#5666b3" stroke-width="1.1" fill="none"/><circle cx="5.2" cy="4" r=".9" fill="#5666b3"/><circle cx="3.8" cy="6.6" r=".9" fill="#5666b3"/><circle cx="6.6" cy="6.6" r=".9" fill="#5666b3"/></svg>
<div class="t " style="left:947.50px;top:509.00px;font-size:9.245px;color:#5666b3;-webkit-text-stroke:0.1px #5666b3;transform:scaleX(0.9259);transform-origin:0 0;">Kostenträger: 10’000 · ...</div>
<svg class="a" style="left:931.5px;top:526.48px;" width="11" height="11" viewBox="0 0 11 11"><circle cx="4.5" cy="2.8" r="1.8" stroke="#5666b3" stroke-width="1" fill="none"/><path d="M.8 9.5C.8 7 2.5 6.2 4.5 6.2" stroke="#5666b3" stroke-width="1" fill="none"/><circle cx="7.5" cy="7.5" r="1.6" stroke="#5666b3" stroke-width="1" fill="none"/><path d="M8.7 8.7L10 10" stroke="#5666b3" stroke-width="1"/></svg>
<div class="t " style="left:947.50px;top:528.00px;font-size:9.245px;color:#5666b3;-webkit-text-stroke:0.1px #5666b3;transform:scaleX(0.9259);transform-origin:0 0;">Standardbuchungsroll...</div>
<svg class="a" style="left:931.5px;top:546.12px;" width="11" height="11" viewBox="0 0 11 11"><path d="M5 10C2.8 7.8 1.5 6 1.5 4.3A3.5 3.5 0 0 1 8.5 4.3C8.5 6 7.2 7.8 5 10Z" stroke="#5666b3" stroke-width="1.1" fill="none"/><circle cx="5" cy="4.3" r="1.2" stroke="#5666b3" stroke-width="1" fill="none"/></svg>
<div class="t " style="left:947.50px;top:548.00px;font-size:9.245px;color:#5666b3;-webkit-text-stroke:0.1px #5666b3;transform:scaleX(0.9259);transform-origin:0 0;">Standort: KKL, Luzern</div>
<svg class="a" style="left:931.5px;top:565.76px;" width="11" height="11" viewBox="0 0 11 11"><circle cx="5" cy="3" r="2" stroke="#5666b3" stroke-width="1.1" fill="none"/><path d="M1 9.8C1 7.3 3 6.5 5 6.5S9 7.3 9 9.8Z" stroke="#5666b3" stroke-width="1.1" fill="none"/></svg>
<div class="t " style="left:947.50px;top:568.00px;font-size:9.245px;color:#5666b3;-webkit-text-stroke:0.1px #5666b3;transform:scaleX(0.9259);transform-origin:0 0;">Verantwortlich: Beetho...</div>
<svg class="a" style="left:934px;top:588.9px;" width="7" height="5" viewBox="0 0 7 5"><path d="M1 1L3.5 3.5L6 1" stroke="#333" stroke-width="1.2" fill="none"/></svg>
<div class="t " style="left:947.50px;top:587.00px;font-size:9.245px;color:#5666b3;-webkit-text-stroke:0.1px #5666b3;transform:scaleX(0.9259);transform-origin:0 0;">Auftragsabrechnungen</div>
<svg class="a" style="left:934px;top:608.54px;" width="7" height="5" viewBox="0 0 7 5"><path d="M1 1L3.5 3.5L6 1" stroke="#333" stroke-width="1.2" fill="none"/></svg>
<div class="t " style="left:947.50px;top:607.00px;font-size:9.245px;color:#5666b3;-webkit-text-stroke:0.1px #5666b3;transform:scaleX(0.9259);transform-origin:0 0;">Belege</div>
<svg class="a" style="left:934px;top:628.1800000000001px;" width="7" height="5" viewBox="0 0 7 5"><path d="M1 1L3.5 3.5L6 1" stroke="#333" stroke-width="1.2" fill="none"/></svg>
<div class="t " style="left:947.50px;top:626.00px;font-size:9.245px;color:#5666b3;-webkit-text-stroke:0.1px #5666b3;transform:scaleX(0.9259);transform-origin:0 0;">Dokumentverbindungen</div>
<div class="a" style="left:922px;top:634.5px;width:128.5px;height:16px;background:#f0f1f3"></div>
<div class="a" style="left:180px;top:634px;width:730px;height:16px;background:#f0f1f3"></div>
<div class="t " style="left:999.00px;top:640.00px;font-size:6.728px;color:#a9abae;letter-spacing:0.054000000000000006px;transform:scaleX(0.9259);transform-origin:0 0;">23.25.1127.1-2711</div>
<div class="a" style="left:920px;top:367px;width:2.5px;height:21px;background:#c6c6c6;border-radius:2px"></div>
<div class="a" style="left:1062.5px;top:315px;width:3px;height:22px;background:#cdcdcd;border-radius:2px"></div>
<div class="a" style="left:28px;top:2px;width:1px;height:648px;background:#878787"></div>
<div class="a" style="left:29px;top:2px;width:1px;height:648px;background:#dedede"></div>
<div class="a" style="left:1064px;top:33px;width:1px;height:617px;background:#f6f7f8"></div>
<div class="a" style="left:1065px;top:2px;width:1px;height:648px;background:#c3c4c6"></div>
<div class="a" style="left:29px;top:33px;width:1037px;height:4px;background:linear-gradient(rgba(0,0,0,.075),rgba(0,0,0,.02) 50%,rgba(0,0,0,0))"></div>
</body></html>
